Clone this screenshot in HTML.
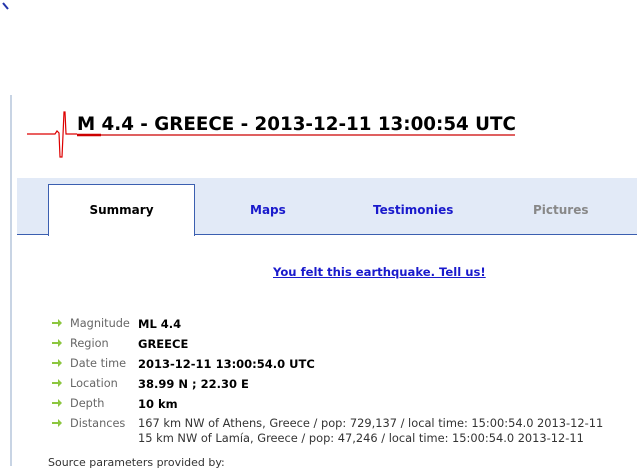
<!DOCTYPE html>
<html><head><meta charset="utf-8"><style>
body{margin:0;width:637px;height:466px;overflow:hidden;background:#fff;font-family:"DejaVu Sans",Verdana,sans-serif;position:relative}
.a{position:absolute}
.lab{color:#666;font-size:11px}
.val{color:#000;font-size:11.5px;font-weight:bold}
</style></head><body>
<svg class="a" style="left:0;top:0" width="12" height="14"><path d="M3 3 L8 9" stroke="#2233aa" stroke-width="2"/></svg>
<div class="a" style="left:10px;top:95px;width:2px;height:371px;background:#c8d4e4"></div>
<svg class="a" style="left:26px;top:105px" width="500" height="60">
<path d="M1 29 H29 L31 26 L33 28 L34 52 L36 52 L37 30 L38 7 L39 7 L40 29 H51" stroke="#d00" stroke-width="1.2" fill="none"/>
<path d="M51 30 H489" stroke="#c00" stroke-width="1.2"/>
<path d="M51 30 H75" stroke="#c00" stroke-width="2.5"/>
</svg>
<div class="a" style="left:77px;top:114px;font-size:18.3px;font-weight:bold;color:#000;white-space:nowrap">M 4.4 - GREECE - 2013-12-11 13:00:54 UTC</div>
<div class="a" style="left:17px;top:178px;width:620px;height:56px;background:#e2eaf7;border-bottom:1px solid #3b5fb0"></div>
<div class="a" style="left:48px;top:184px;width:145px;height:51px;background:#fff;border:1px solid #3b5fb0;border-bottom:none"></div>
<div class="a" style="left:48px;top:203px;width:147px;text-align:center;font-size:12px;font-weight:bold">Summary</div>
<div class="a" style="left:250px;top:203px;font-size:12px;font-weight:bold;color:#1a1acc">Maps</div>
<div class="a" style="left:373px;top:203px;font-size:12px;font-weight:bold;color:#1a1acc">Testimonies</div>
<div class="a" style="left:533px;top:203px;font-size:12px;font-weight:bold;color:#888">Pictures</div>
<div class="a" style="left:273px;top:265px;font-size:11.6px;font-weight:bold;color:#1a1acc;text-decoration:underline">You felt this earthquake. Tell us!</div>
<svg class="a" style="left:52px;top:319px" width="12" height="110">
<g fill="#8cc63f"><path id="ar" d="M0 3 H6 V0 L10 4 L6 8 V5 H0Z"/>
<use href="#ar" y="20"/><use href="#ar" y="40"/><use href="#ar" y="60"/><use href="#ar" y="80"/><use href="#ar" y="100"/></g>
</svg>
<div class="a lab" style="left:70px;top:314px;line-height:20px;font-size:11.3px">Magnitude<br>Region<br>Date time<br>Location<br>Depth<br>Distances</div>
<div class="a" style="left:138px;top:314px;line-height:20px">
<div class="val">ML 4.4</div><div class="val">GREECE</div><div class="val">2013-12-11 13:00:54.0 UTC</div><div class="val">38.99 N ; 22.30 E</div><div class="val">10 km</div>
<div style="font-size:11.4px;color:#333;line-height:15px;margin-top:2px;white-space:nowrap">167 km NW of Athens, Greece / pop: 729,137 / local time: 15:00:54.0 2013-12-11<br>15 km NW of Lamía, Greece / pop: 47,246 / local time: 15:00:54.0 2013-12-11</div>
</div>
<div class="a" style="left:48px;top:456px;font-size:11px;color:#333">Source parameters provided by:</div>
</body></html>
